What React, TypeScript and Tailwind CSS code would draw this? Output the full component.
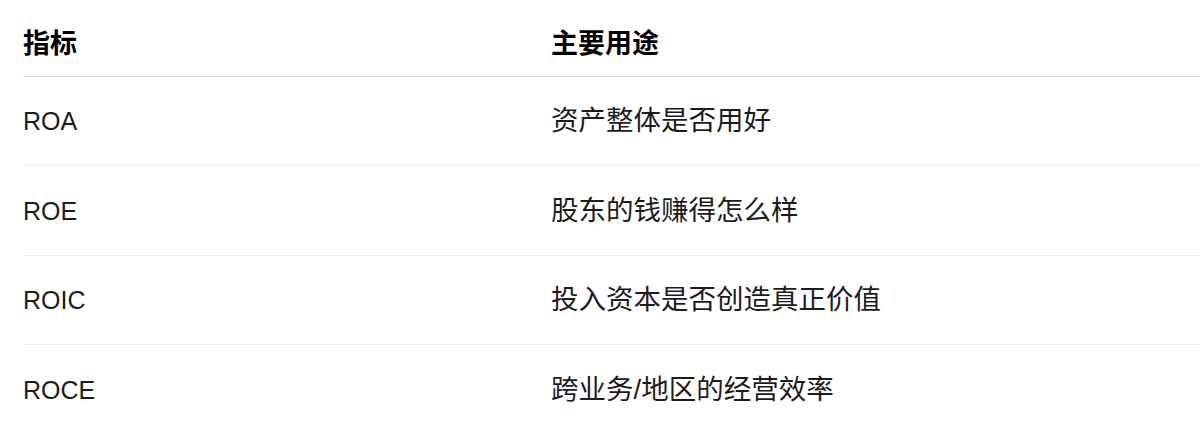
const rows = [
  { name: "ROA", use: "资产整体是否用好" },
  { name: "ROE", use: "股东的钱赚得怎么样" },
  { name: "ROIC", use: "投入资本是否创造真正价值" },
  { name: "ROCE", use: "跨业务/地区的经营效率" },
]

const font = { fontFamily: '"Liberation Sans", "Noto Sans CJK SC", sans-serif' }

export default function App() {
  return (
    <div className="w-[1200px] h-[436px] overflow-hidden bg-white pl-[23px]" style={font}>
      <div className="w-[1177px]">
        <div className="flex h-[76.5px] border-b border-[#dadada] pt-[23px] text-black">
          <div className="w-[528px] text-[27px] leading-[42px] font-bold">指标</div>
          <div className="flex-1 text-[27px] leading-[42px] font-bold">主要用途</div>
        </div>
        {rows.map((r, i) => (
          <div
            key={r.name}
            className={
              "flex items-center h-[89.5px] text-[#1c1c1c] " +
              (i < rows.length - 1 ? "border-b border-[#eeeeee]" : "")
            }
          >
            <div className="w-[528px] text-[25px] pt-[2px]">{r.name}</div>
            <div className="flex-1 text-[27.5px]">{r.use}</div>
          </div>
        ))}
      </div>
    </div>
  )
}
